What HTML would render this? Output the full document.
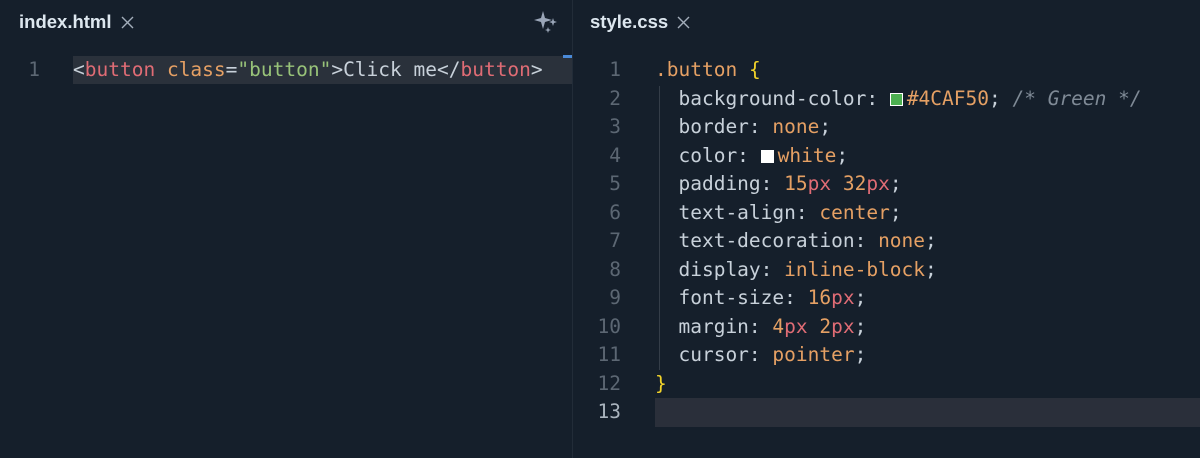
<!DOCTYPE html>
<html><head><style>
body{margin:0;width:1200px;height:458px;background:#151f2b;overflow:hidden;position:relative;font-family:"DejaVu Sans Mono","Liberation Mono",monospace;}
.tab{position:absolute;top:11px;font:bold 18.5px "Liberation Sans",sans-serif;color:#dde7ef;}
.tab svg{margin-left:9px;vertical-align:-1px}
.div{position:absolute;left:572px;top:0;width:1px;height:458px;background:#222c38;}
.row{position:absolute;height:28.5px;line-height:28.5px;font-size:19.5px;color:#c8d1da;white-space:pre;}
.ln{position:absolute;width:40px;text-align:right;font-size:19.5px;line-height:28.5px;color:#5c6773;}
.t{color:#e06c75}.a{color:#e5a064}.s{color:#98c379}.n{color:#e5a064}.u{color:#e06c75}.c{color:#7f8a96;font-style:italic}.b{color:#f2d32a}
.sw{display:inline-block;width:13px;height:13px;border:1.5px solid #fff;vertical-align:-1px;margin-right:4px;box-sizing:border-box}
</style></head><body>
<div class="tab" style="left:19px">index.html<svg width="13" height="13" viewBox="0 0 13 13"><path d="M1 1L12 12M12 1L1 12" stroke="#a3aebb" stroke-width="1.4"/></svg></div>
<svg style="position:absolute;left:533px;top:10px" width="26" height="24" viewBox="0 0 26 24"><path d="M10 1 L12 8 L19 10 L12 12 L10 19 L8 12 L1 10 L8 8Z" fill="#9aa6b8"/><path d="M20 8 L21 11 L24 12 L21 13 L20 16 L19 13 L16 12 L19 11Z" fill="#9aa6b8"/><path d="M15 17 L15.8 19.2 L18 20 L15.8 20.8 L15 23 L14.2 20.8 L12 20 L14.2 19.2Z" fill="#9aa6b8"/></svg>
<div class="tab" style="left:590px">style.css<svg width="13" height="13" viewBox="0 0 13 13"><path d="M1 1L12 12M12 1L1 12" stroke="#a3aebb" stroke-width="1.4"/></svg></div>
<div class="div"></div>
<div style="position:absolute;left:73px;top:56px;width:499px;height:28px;background:#2a313b"></div>
<div style="position:absolute;left:563px;top:55px;width:9px;height:3px;background:#4a8ad8"></div>
<div class="ln" style="left:0;top:56px">1</div>
<div class="row" style="left:73px;top:56px">&lt;<span class="t">button</span> <span class="a">class</span>=<span class="s">"button"</span>&gt;Click me&lt;/<span class="t">button</span>&gt;</div>
<div style="position:absolute;left:655px;top:398px;width:545px;height:29px;background:#2a2f3a"></div>
<div style="position:absolute;left:659px;top:86px;width:1px;height:284px;background:#343d48"></div>
<div id="r"></div>
<script>
var L=[
'<span class="a">.button</span> <span class="b">{</span>',
'  background-color: <span class="sw" style="background:#4CAF50"></span><span class="n">#4CAF50</span>; <span class="c">/* Green */</span>',
'  border: <span class="n">none</span>;',
'  color: <span class="sw" style="background:#fff"></span><span class="n">white</span>;',
'  padding: <span class="n">15</span><span class="u">px</span> <span class="n">32</span><span class="u">px</span>;',
'  text-align: <span class="n">center</span>;',
'  text-decoration: <span class="n">none</span>;',
'  display: <span class="n">inline-block</span>;',
'  font-size: <span class="n">16</span><span class="u">px</span>;',
'  margin: <span class="n">4</span><span class="u">px</span> <span class="n">2</span><span class="u">px</span>;',
'  cursor: <span class="n">pointer</span>;',
'<span class="b">}</span>',
''];
var h='';
for(var i=0;i<13;i++){var t=56+i*28.5;
h+='<div class="ln" style="left:581px;top:'+t+'px;'+(i==12?'color:#aab4be':'')+'">'+(i+1)+'</div><div class="row" style="left:655px;top:'+t+'px">'+L[i]+'</div>';}
document.getElementById('r').innerHTML=h;
</script>
</body></html>
